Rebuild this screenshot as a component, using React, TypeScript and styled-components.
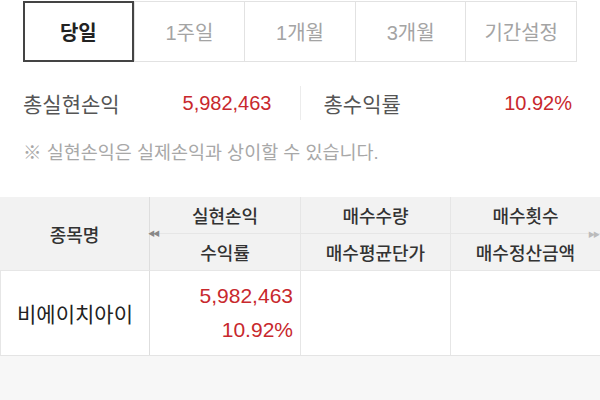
import styled, { createGlobalStyle } from "styled-components";

const GlobalStyle = createGlobalStyle`
  html, body {
    margin: 0;
    padding: 0;
    background: #f7f7f7;
  }
  body {
    font-family: "Liberation Sans", "Noto Sans CJK KR", sans-serif;
  }
`;

const tabs = ["당일", "1주일", "1개월", "3개월", "기간설정"];

export default function App() {
  return (
    <>
      <GlobalStyle />
      <Page>
        <Top>
          <TabBar>
            {tabs.map((t, i) => (
              <Tab key={t} active={i === 0}>
                {t}
              </Tab>
            ))}
          </TabBar>

          <Summary>
            <SummaryHalf>
              <Label>총실현손익</Label>
              <Value>5,982,463</Value>
            </SummaryHalf>
            <VDivider />
            <SummaryHalf>
              <Label>총수익률</Label>
              <Value>10.92%</Value>
            </SummaryHalf>
          </Summary>

          <Note>※ 실현손익은 실제손익과 상이할 수 있습니다.</Note>
        </Top>

        <Table>
          <HeadName>종목명</HeadName>
          <HeadCell>
            <ArrowLeft>◀◀</ArrowLeft>
            실현손익
          </HeadCell>
          <HeadCell>매수수량</HeadCell>
          <HeadCell>매수횟수</HeadCell>
          <HeadCell bottom>수익률</HeadCell>
          <HeadCell bottom>매수평균단가</HeadCell>
          <HeadCell bottom>
            매수정산금액
            <ArrowRight>▶▶</ArrowRight>
          </HeadCell>

          <NameCell>비에이치아이</NameCell>
          <NumCell>
            <span>5,982,463</span>
            <span>10.92%</span>
          </NumCell>
          <EmptyCell />
          <EmptyCell />
        </Table>
      </Page>
    </>
  );
}

const Page = styled.div`
  width: 600px;
  height: 400px;
  overflow: hidden;
`;

const Top = styled.div`
  background: #ffffff;
  padding: 1px 0 33px;
`;

const TabBar = styled.div`
  display: grid;
  grid-template-columns: repeat(5, 1fr);
  margin: 0 23px;
  height: 59px;
  border: 1px solid #e2e2e2;
  border-left: none;
`;

const Tab = styled.div<{ active?: boolean }>`
  display: flex;
  align-items: center;
  justify-content: center;
  font-size: 20px;
  font-weight: ${({ active }) => (active ? 700 : 400)};
  color: ${({ active }) => (active ? "#222" : "#a4a4a4")};
  border-left: 1px solid #e2e2e2;
  box-sizing: border-box;
  ${({ active }) =>
    active &&
    `
    border: 2px solid #444;
    margin: -1px 0 -1px 0;
  `}
`;

const Summary = styled.div`
  display: flex;
  align-items: center;
  margin: 24px 28px 0 23px;
  height: 34px;
`;

const SummaryHalf = styled.div`
  flex: 1;
  display: flex;
  justify-content: space-between;
  align-items: center;
`;

const VDivider = styled.div`
  width: 1px;
  height: 34px;
  background: #ececec;
  margin: 0 23px 0 28px;
`;

const Label = styled.span`
  font-size: 21px;
  color: #555;
`;

const Value = styled.span`
  font-size: 20px;
  color: #c8282d;
`;

const Note = styled.div`
  margin: 21px 0 0 23px;
  font-size: 18.5px;
  line-height: 23px;
  color: #a8a8a8;
`;

const Table = styled.div`
  display: grid;
  grid-template-columns: 150px 150px 150px 150px;
  grid-template-rows: 36px 37px 85px;
  background: #ffffff;
  border-bottom: 1px solid #e4e4e4;
  box-sizing: border-box;
`;

const HeadName = styled.div`
  grid-row: span 2;
  display: flex;
  align-items: center;
  justify-content: center;
  background: #f2f2f2;
  font-size: 18px;
  font-weight: 500;
  color: #333;
  border-right: 1px solid #dedede;
`;

const HeadCell = styled.div<{ bottom?: boolean }>`
  position: relative;
  display: flex;
  align-items: center;
  justify-content: center;
  background: #f2f2f2;
  font-size: 18px;
  font-weight: 500;
  color: #333;
  border-left: 1px solid #e6e6e6;
  border-top: ${({ bottom }) => (bottom ? "1px solid #e6e6e6" : "none")};
  &:nth-child(2),
  &:nth-child(5) {
    border-left: none;
  }
`;

const ArrowLeft = styled.span`
  position: absolute;
  left: -2px;
  bottom: -5px;
  font-size: 7px;
  letter-spacing: -2px;
  color: #888;
  z-index: 1;
`;

const ArrowRight = styled.span`
  position: absolute;
  right: 2px;
  top: -5px;
  font-size: 7px;
  letter-spacing: -2px;
  color: #bbb;
`;

const NameCell = styled.div`
  display: flex;
  align-items: center;
  justify-content: center;
  font-size: 21px;
  color: #222;
  border-left: 1px solid #e6e6e6;
  border-right: 1px solid #dedede;
  border-top: 1px solid #e6e6e6;
`;

const NumCell = styled.div`
  display: flex;
  flex-direction: column;
  align-items: flex-end;
  justify-content: center;
  gap: 10px;
  padding-right: 7px;
  font-size: 21px;
  color: #c8282d;
  border-top: 1px solid #e6e6e6;
  line-height: 24px;
`;

const EmptyCell = styled.div`
  border-left: 1px solid #e6e6e6;
  border-top: 1px solid #e6e6e6;
`;
